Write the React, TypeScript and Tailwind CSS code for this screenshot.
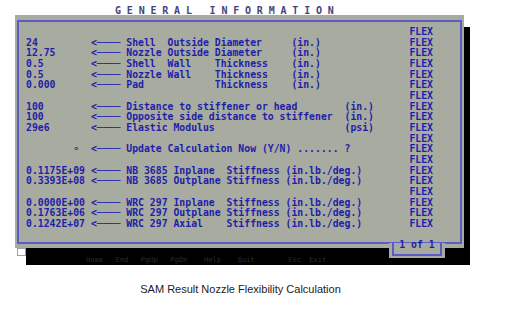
const ARROW = '<────';
const FLEX: [number, string] = [65, 'FLEX'];
const UNIT = 'Stiffness (in.lb./deg.)';

// place each piece of text at its DOS column
const line = (parts: [number, string][]) => {
  let s = '';
  for (const [col, text] of parts) s = s.padEnd(col, ' ') + text;
  return s;
};

const rows: string[] = [
  line([FLEX]),
  line([[0, '24'], [11, ARROW], [17, 'Shell'], [24, 'Outside'], [32, 'Diameter'], [45, '(in.)'], FLEX]),
  line([[0, '12.75'], [11, ARROW], [17, 'Nozzle'], [24, 'Outside'], [32, 'Diameter'], [45, '(in.)'], FLEX]),
  line([[0, '0.5'], [11, ARROW], [17, 'Shell'], [24, 'Wall'], [32, 'Thickness'], [45, '(in.)'], FLEX]),
  line([[0, '0.5'], [11, ARROW], [17, 'Nozzle'], [24, 'Wall'], [32, 'Thickness'], [45, '(in.)'], FLEX]),
  line([[0, '0.000'], [11, ARROW], [17, 'Pad'], [32, 'Thickness'], [45, '(in.)'], FLEX]),
  line([FLEX]),
  line([[0, '100'], [11, ARROW], [17, 'Distance to stiffener or head'], [54, '(in.)'], FLEX]),
  line([[0, '100'], [11, ARROW], [17, 'Opposite side distance to stiffener'], [54, '(in.)'], FLEX]),
  line([[0, '29e6'], [11, ARROW], [17, 'Elastic Modulus'], [54, '(psi)'], FLEX]),
  line([FLEX]),
  line([[8, '∘'], [11, ARROW], [17, 'Update Calculation Now (Y/N) ....... ?'], FLEX]),
  line([FLEX]),
  line([[0, '0.1175E+09'], [11, ARROW], [17, 'NB 3685 Inplane'], [34, UNIT], FLEX]),
  line([[0, '0.3393E+08'], [11, ARROW], [17, 'NB 3685 Outplane'], [34, UNIT], FLEX]),
  line([FLEX]),
  line([[0, '0.0000E+00'], [11, ARROW], [17, 'WRC 297 Inplane'], [34, UNIT], FLEX]),
  line([[0, '0.1763E+06'], [11, ARROW], [17, 'WRC 297 Outplane'], [34, UNIT], FLEX]),
  line([[0, '0.1242E+07'], [11, ARROW], [17, 'WRC 297 Axial'], [34, UNIT], FLEX]),
];

const mono = "font-['DejaVu_Sans_Mono','Liberation_Mono',monospace]";

export default function App() {
  return (
    <div className="w-[509px] h-[314px] bg-white overflow-hidden">
      {/* Title */}
      <div
        className={`pt-[6px] pl-[115px] h-[15px] text-[10px] leading-[9px] font-bold tracking-[5.8px] text-[#44447e] whitespace-pre ${mono}`}
      >
        GENERAL INFORMATION
      </div>

      {/* DOS window */}
      <div className="relative ml-[15px] w-[456px]">
        <div className="flex">
          <div className="w-[449px] h-[233px] bg-[#a8ab9f] pt-[5px] px-[2px] pb-[4px] flex flex-col">
            <div
              className={`flex-1 border-2 border-[#5c5cc6] pt-[5px] pl-[7px] text-[9.8px] leading-[10.67px] font-bold text-[#1e1eaa] ${mono}`}
            >
              {rows.map((r, i) => (
                <div key={i} className="whitespace-pre h-[10.67px]">
                  {r}
                </div>
              ))}
            </div>
          </div>
          <div className="w-[6px] mt-[12px] bg-black" />
        </div>

        <div className="flex h-[17px]">
          <div className="ml-[2px] w-[9px] h-[8px] bg-white border border-[#9a9eb4]" />
          <div
            className={`w-[444px] bg-black pl-[60px] pt-[9px] text-[7px] leading-[7px] text-[#2c2c2c] whitespace-pre ${mono}`}
          >
            {'Home   End   PgUp   PgDn    Help    Quit        Esc  Exit'}
          </div>
        </div>

        {/* page tab */}
        <div className="absolute left-[374px] top-[228px] w-[56px] h-[15px] bg-[#a8ab9f] px-[3px] pb-[2px] flex">
          <div
            className={`flex-1 border-x-2 border-b-2 border-[#5c5cc6] text-center text-[9.8px] leading-[10.67px] font-bold text-[#1e1eaa] whitespace-pre ${mono}`}
          >
            <div className="-mt-[3px]">1 of 1</div>
          </div>
        </div>
      </div>

      {/* Caption */}
      <div className="mt-[18px] w-[481px] text-center text-[11px] leading-[13px] text-[#222] font-['Liberation_Sans',Arial,sans-serif]">
        SAM Result Nozzle Flexibility Calculation
      </div>
    </div>
  );
}
